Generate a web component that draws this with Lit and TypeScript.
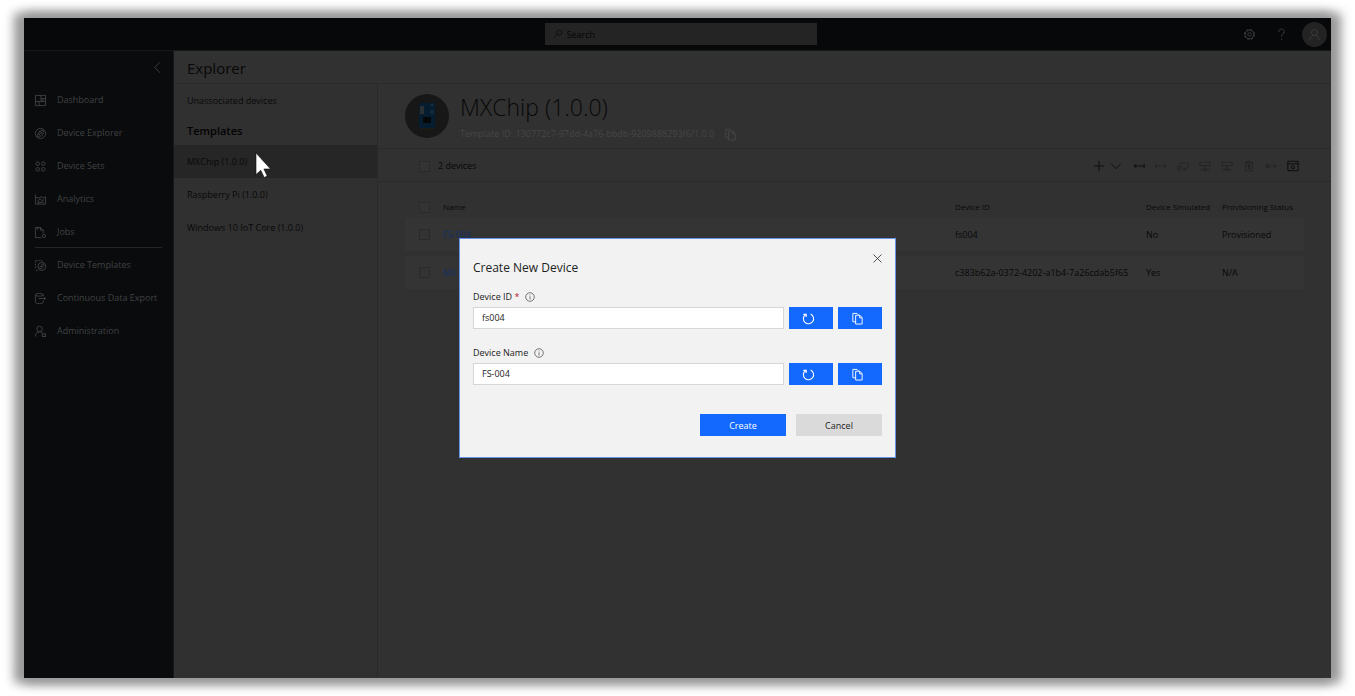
import { LitElement, html, css, svg } from "lit";
import { customElement, property } from "lit/decorators.js";
import { classMap } from "lit/directives/class-map.js";

const glyphs: Record<string, unknown> = {
  dashboard: svg`<path d="M1.500 1.500h11v11h-11zM7.500 1.500v6.500M1.500 8h11M7.500 5h5M5.500 8v4.500M9.500 5v3"/>`,
  explorer: svg`<circle cx="7" cy="7" r="5.500"/><circle cx="8.700" cy="4.800" r="1.500"/><circle cx="5" cy="9.200" r="1.500"/><path d="M7.500 6 6 8M4.500 7.500 6.500 4M7.500 10.500l2.800-3.800"/>`,
  sets: svg`<circle cx="4" cy="4" r="1.900"/><circle cx="10" cy="4" r="1.900"/><circle cx="4" cy="10" r="1.900"/><circle cx="10" cy="10" r="1.900"/>`,
  analytics: svg`<path d="M1.500 1.500v10.500h11V4L10 5.500 7.500 4 5 5.500 1.500 4.500M4.500 12V8l2-1.500 2.500 2 2-1.500M4.500 10h6"/>`,
  jobs: svg`<path d="M8 12.500H1.500v-11h5.500l3 3V8M7 1.500v3h3M3.500 1.500V4M5 1.500V3"/><circle cx="10.700" cy="10.700" r="1.800"/>`,
  templates: svg`<path d="M4 12.500H1.500M1.500 10V1.500h7V3" stroke-dasharray="2 1"/><circle cx="8.500" cy="8" r="4.300"/><circle cx="9.400" cy="6.800" r="1.300"/><circle cx="7.400" cy="9.200" r="1.300"/>`,
  export: svg`<path d="M10 4.500V3c0-.8-2-1.500-4.200-1.500S1.500 2.200 1.500 3v8c0 .8 2 1.500 4.300 1.500S10 11.800 10 11V9.500M1.500 3c0 .9 2 1.500 4.300 1.500S10 3.900 10 3M5 7h7.500M10.500 5l2 2-2 2"/>`,
  admin: svg`<circle cx="6" cy="4.300" r="3"/><path d="M1.500 12.500C1.500 9.500 3.500 7.300 6 7.300c1.500 0 2.500.5 3.300 1.500"/><rect x="9" y="9.500" width="3.500" height="3"/>`,
  back: svg`<path d="M9.500 1.500 4 7l5.500 5.500"/>`,
  search: svg`<circle cx="8.800" cy="5" r="3.600"/><path d="M6.200 7.600 1.300 12.500"/>`,
  gear: svg`<circle cx="7" cy="7" r="5.500" stroke-dasharray="2.400 1.920"/><circle cx="7" cy="7" r="4.600"/><circle cx="7" cy="7" r="1.900"/>`,
  help: svg`<path d="M4 4.200C4 2.300 5.300 1.200 7 1.200s3 1.100 3 2.800C10 6.300 7 6.500 7 9.300M7 11.300v1.500"/>`,
  user: svg`<circle cx="7" cy="4.800" r="3.200"/><path d="M2 13c0-2.800 2-5 5-5s5 2.200 5 5"/>`,
  copy: svg`<path d="M5 10.500H2v-9h4.500L8 3M5 3.500h4.500L12 6v7H5zM9.300 3.500v2.800H12"/>`,
  plus: svg`<path d="M7 1v12M1 7h12"/>`,
  down: svg`<path d="M1.500 4.500 7 10l5.500-5.500"/>`,
  importIn: svg`<path d="M13 4.500v5M1 7h12M4 4.500 1.500 7 4 9.500"/>`,
  exportOut: svg`<path d="M1 4.500v5M1 7h12M10 4.500 12.500 7 10 9.500"/>`,
  migrate: svg`<path d="M4 6V3.500h9v6H6M1 7.500h3.500v4H1zM7 11.500h4M9 9.500v2"/>`,
  connect: svg`<path d="M1 2.500h12v4H1zM7 6.500v3M1 11.500h4.500M8.500 11.500H13M5.500 10h3v2.500h-3z"/>`,
  disconnect: svg`<path d="M1 2.500h12v4H1zM7 6.500v2M1 11.500h12M4.500 11 7 8.500 9.500 11z"/>`,
  trash: svg`<path d="M3 3h8v10H3zM2 3h10M5 3V1.500h4V3"/><path d="M6 5.500h2v5H6z" fill="currentColor"/>`,
  associate: svg`<rect x="1" y="5" width="4" height="4" fill="currentColor" opacity=".7"/><path d="M6 7h7M10.500 4.500 13 7l-2.500 2.500"/>`,
  columns: svg`<path d="M1 1.500h12v11H1zM1 4.500h12"/><circle cx="7" cy="8.500" r="1.800"/>`,
  close: svg`<path d="m2 2 10 10M12 2 2 12"/>`,
  info: svg`<circle cx="7" cy="7" r="6"/><path d="M7 6v4.500M7 3.500v1.200"/>`,
  refresh: svg`<path d="M9.300 2.200a5.500 5.500 0 1 1-5.600.6M1.500 2.500h3v3" stroke-width="1.200"/>`,
};

@customElement("ui-icon")
class UiIcon extends LitElement {
  @property() name = "";
  static styles = css`
    :host { display: block; flex: none; width: 13px; height: 13px; }
    svg { display: block; width: 100%; height: 100%; fill: none; stroke: currentColor; }
  `;
  render() {
    return html`<svg viewBox="0 0 14 14" aria-hidden="true">${glyphs[this.name]}</svg>`;
  }
}

const mainNav = [
  ["dashboard", "Dashboard"],
  ["explorer", "Device Explorer"],
  ["sets", "Device Sets"],
  ["analytics", "Analytics"],
  ["jobs", "Jobs"],
];
const moreNav = [
  ["templates", "Device Templates"],
  ["export", "Continuous Data Export"],
  ["admin", "Administration"],
];
const templates = ["MXChip (1.0.0)", "Raspberry Pi (1.0.0)", "Windows 10 IoT Core (1.0.0)"];
const devices = [
  { name: "FS-004", id: "fs004", simulated: "No", status: "Provisioned" },
  { name: "MX", id: "c383b62a-0372-4202-a1b4-7a26cdab5f65", simulated: "Yes", status: "N/A" },
];
const tools = [
  { icon: "importIn", label: "Import", on: true },
  { icon: "exportOut", label: "Export", on: false },
  { icon: "migrate", label: "Migrate", on: false },
  { icon: "connect", label: "Connect", on: false },
  { icon: "disconnect", label: "Disconnect", on: false },
  { icon: "trash", label: "Delete", on: false },
  { icon: "associate", label: "Associate", on: false },
  { icon: "columns", label: "Column options", on: true },
];

@customElement("app-root")
class AppRoot extends LitElement {
  static styles = css`
    :host {
      display: flex;
      box-sizing: border-box;
      min-height: 100vh;
      padding: 18px 24px;
      background: #fff;
      font-family: "Open Sans", "Noto Sans", sans-serif;
      font-size: 9px;
      line-height: 16px;
    }
    * { box-sizing: border-box; }
    button, input { font: inherit; color: inherit; margin: 0; padding: 0; border: 0; background: none; border-radius: 0; }
    button { display: grid; place-items: center; }
    a { color: inherit; text-decoration: none; }
    h1, h2, h3, p, ul { margin: 0; padding: 0; font-weight: 400; list-style: none; }
    .app {
      position: relative;
      flex: 1;
      display: flex;
      flex-direction: column;
      background: #313131;
      color: #080808;
      box-shadow: -5px 0 10px 5px #999, 5px 0 10px 5px #999;
    }
    .topbar {
      display: grid;
      grid-template-columns: 1fr 272px 1fr;
      align-items: center;
      height: 33px;
      padding-left: 6px;
      background: #060809;
      border-bottom: 1px solid #161919;
    }
    .search {
      grid-column: 2;
      display: flex;
      align-items: center;
      gap: 4px;
      height: 22px;
      padding-left: 8px;
      background: #242424;
      color: #0a0a0a;
    }
    .search ui-icon { width: 10px; height: 10px; }
    .search input { flex: 1; min-width: 0; padding-top: 2px; outline: none; }
    .search input::placeholder { color: #050505; opacity: 1; }
    .account { display: flex; justify-content: flex-end; align-items: center; padding-right: 4px; color: #3c3e3f; }
    .account button { width: 32px; height: 32px; }
    .account .avatar { width: 25px; height: 25px; margin-left: 5px; border-radius: 50%; background: #232323; color: #3c3c3c; }
    .body { flex: 1; display: flex; }
    .sidebar { width: 150px; flex: none; background: #090b0d; color: #414243; border-right: 1px solid #15181a; }
    .collapse { width: 32px; height: 32px; margin-left: auto; }
    .nav { display: grid; gap: 1px; padding: 0 10px; }
    .nav a { display: flex; align-items: center; gap: 10px; height: 32px; padding-top: 2px; }
    .rule { height: 1px; background: #242628; margin: 0 11px; }
    .content { flex: 1; min-width: 0; display: flex; flex-direction: column; }
    .heading { height: 33px; padding: 0 13px; line-height: 34px; font-size: 15px; border-bottom: 1px solid #2b2b2b; }
    .split { flex: 1; display: flex; }
    .tree { width: 204px; flex: none; border-right: 1px solid #292929; background: #303030; }
    .tree a { display: block; height: 33px; line-height: 34px; padding: 0 13px; }
    .tree h2 { height: 28px; line-height: 28px; padding: 0 13px; font-size: 11px; font-weight: 600; color: #030303; }
    .tree .selected { background: #262626; }
    .main { flex: 1; min-width: 0; }
    .summary { display: flex; align-items: center; gap: 11px; height: 65px; padding: 0 27px; border-bottom: 1px solid #2a2a2a; }
    .picture { flex: none; width: 44px; height: 44px; border-radius: 50%; background: #171717; }
    .about { padding-top: 2px; }
    .about h1 { font-size: 23px; font-weight: 300; line-height: 34px; }
    .template-id { display: flex; align-items: center; gap: 10px; line-height: 20px; color: #464646; }
    .toolbar { display: flex; align-items: center; height: 33px; padding: 2px 27px 0 41px; border-bottom: 1px solid #2a2a2a; }
    .count { display: flex; align-items: center; gap: 8px; margin-right: auto; }
    .toolbar button { width: 22px; height: 22px; }
    .toolbar button:disabled { color: #232323; }
    .toolbar .add { width: 16px; }
    .toolbar .more { width: 18px; margin-right: 3px; }
    .toolbar ui-icon { width: 12px; height: 12px; }
    .check { appearance: none; display: block; width: 11px; height: 11px; border: 1px solid #2a2a2a; background: #333; }
    .grid { padding: 0 27px; }
    table { width: 100%; table-layout: fixed; border-collapse: separate; border-spacing: 0; text-align: left; }
    th { height: 36px; padding: 14px 0 0; font-size: 8px; font-weight: 400; }
    td { height: 38px; padding: 0; background: #343434; background-clip: padding-box; border-bottom: 5px solid transparent; }
    .pick { width: 38px; padding-left: 14px; }
    .id { width: 191px; }
    .sim { width: 76px; }
    .status { width: 82px; }
    .link { color: #143064; }
    .pointer { position: absolute; left: 231px; top: 134px; width: 18px; height: 27px; }
    .overlay { position: absolute; inset: 0; display: grid; place-items: center; }
    .dialog { width: 437px; padding: 12px 13px 21px; background: #f2f2f2; border: 1px solid #6692e8; color: #222; }
    .title { display: flex; justify-content: space-between; align-items: flex-start; height: 26px; }
    .title h2 { margin-top: 8px; font-size: 12px; line-height: 18px; }
    .title button { width: 10px; height: 14px; }
    .title ui-icon { width: 11px; height: 11px; }
    .label { display: flex; align-items: center; gap: 6px; margin: 12px 0 2px; }
    .label ui-icon { width: 10px; height: 10px; color: #444; }
    .field + .field .label { margin-top: 16px; }
    .required { color: #b3202c; }
    .row { display: grid; grid-template-columns: 1fr 44px 44px; gap: 5px; }
    .row input { height: 22px; min-width: 0; padding: 0 8px 2px; background: #fff; border: 1px solid #d6d6d6; }
    .row button { height: 22px; padding: 1px 5px 0 0; background: #1369fe; color: #fff; }
    .actions { display: flex; justify-content: flex-end; gap: 10px; margin-top: 29px; }
    .actions button { width: 86px; height: 22px; padding-top: 2px; background: #dadada; }
    .actions .primary { background: #1369fe; color: #fff; }
  `;

  navList(items: string[][]) {
    return html`<div class="nav">
      ${items.map(([icon, label]) => html`<a href="#"><ui-icon name=${icon}></ui-icon>${label}</a>`)}
    </div>`;
  }

  field(id: string, label: string, value: string, required: boolean) {
    return html`<div class="field">
      <div class="label">
        <label for=${id}>${label}${required ? html` <span class="required">*</span>` : ""}</label>
        <ui-icon name="info"></ui-icon>
      </div>
      <div class="row">
        <input id=${id} type="text" .value=${value} />
        <button type="button" aria-label="Regenerate"><ui-icon name="refresh"></ui-icon></button>
        <button type="button" aria-label="Copy"><ui-icon name="copy"></ui-icon></button>
      </div>
    </div>`;
  }

  render() {
    return html`<div class="app">
      <header class="topbar">
        <label class="search"><ui-icon name="search"></ui-icon><input type="text" placeholder="Search" aria-label="Search" /></label>
        <div class="account">
          <button aria-label="Settings"><ui-icon name="gear"></ui-icon></button>
          <button aria-label="Help"><ui-icon name="help"></ui-icon></button>
          <button class="avatar" aria-label="Account"><ui-icon name="user"></ui-icon></button>
        </div>
      </header>
      <div class="body">
        <nav class="sidebar">
          <button class="collapse" aria-label="Collapse"><ui-icon name="back"></ui-icon></button>
          ${this.navList(mainNav)}
          <div class="rule"></div>
          ${this.navList(moreNav)}
        </nav>
        <div class="content">
          <h1 class="heading">Explorer</h1>
          <div class="split">
            <div class="tree">
              <a href="#">Unassociated devices</a>
              <h2>Templates</h2>
              ${templates.map((t, i) => html`<a href="#" class=${classMap({ selected: i === 0 })}>${t}</a>`)}
            </div>
            <main class="main">
              <section class="summary">
                <svg class="picture" viewBox="0 0 44 44" aria-hidden="true">
                  <rect x="14" y="9" width="16" height="25" rx="1" fill="#061c2f" />
                  <rect x="15" y="12" width="4" height="8" fill="#2b3032" />
                  <rect x="18" y="23" width="8" height="6" fill="#050809" />
                  <circle cx="27" cy="11" r="1" fill="#1f3a4b" />
                  <circle cx="27" cy="18" r="1.500" fill="none" stroke="#1f3a4b" />
                  <path d="M15 35h14" stroke="#29270f" stroke-dasharray="1 1" />
                </svg>
                <div class="about">
                  <h1>MXChip (1.0.0)</h1>
                  <p class="template-id">Template ID: 130772c7-97dd-4a76-bbdb-9209888293f6/1.0.0 <ui-icon name="copy"></ui-icon></p>
                </div>
              </section>
              <section class="toolbar">
                <label class="count"><input class="check" type="checkbox" />2 devices</label>
                <button class="add" aria-label="New device"><ui-icon name="plus"></ui-icon></button>
                <button class="more" aria-label="More"><ui-icon name="down"></ui-icon></button>
                ${tools.map((t) => html`<button aria-label=${t.label} ?disabled=${!t.on}><ui-icon name=${t.icon}></ui-icon></button>`)}
              </section>
              <section class="grid">
                <table>
                  <thead>
                    <tr>
                      <th class="pick"><input class="check" type="checkbox" aria-label="Select all" /></th>
                      <th>Name</th>
                      <th class="id">Device ID</th>
                      <th class="sim">Device Simulated</th>
                      <th class="status">Provisioning Status</th>
                    </tr>
                  </thead>
                  <tbody>
                    ${devices.map((d) => html`<tr>
                      <td class="pick"><input class="check" type="checkbox" aria-label=${d.name} /></td>
                      <td><a class="link" href="#">${d.name}</a></td>
                      <td>${d.id}</td>
                      <td>${d.simulated}</td>
                      <td>${d.status}</td>
                    </tr>`)}
                  </tbody>
                </table>
              </section>
            </main>
          </div>
        </div>
      </div>
      <svg class="pointer" viewBox="0 0 18 27" aria-hidden="true">
        <path d="M1 1v21.500l4.800-4.200 3.400 7.200 3-1.400-3.300-7.100h6.600z" fill="#fff" stroke="#111" stroke-width=".6" />
      </svg>
      <div class="overlay">
        <form class="dialog" role="dialog" aria-label="Create New Device">
          <div class="title">
            <h2>Create New Device</h2>
            <button type="button" aria-label="Close"><ui-icon name="close"></ui-icon></button>
          </div>
          ${this.field("device-id", "Device ID", "fs004", true)}
          ${this.field("device-name", "Device Name", "FS-004", false)}
          <div class="actions">
            <button type="button" class="primary">Create</button>
            <button type="button">Cancel</button>
          </div>
        </form>
      </div>
    </div>`;
  }
}
